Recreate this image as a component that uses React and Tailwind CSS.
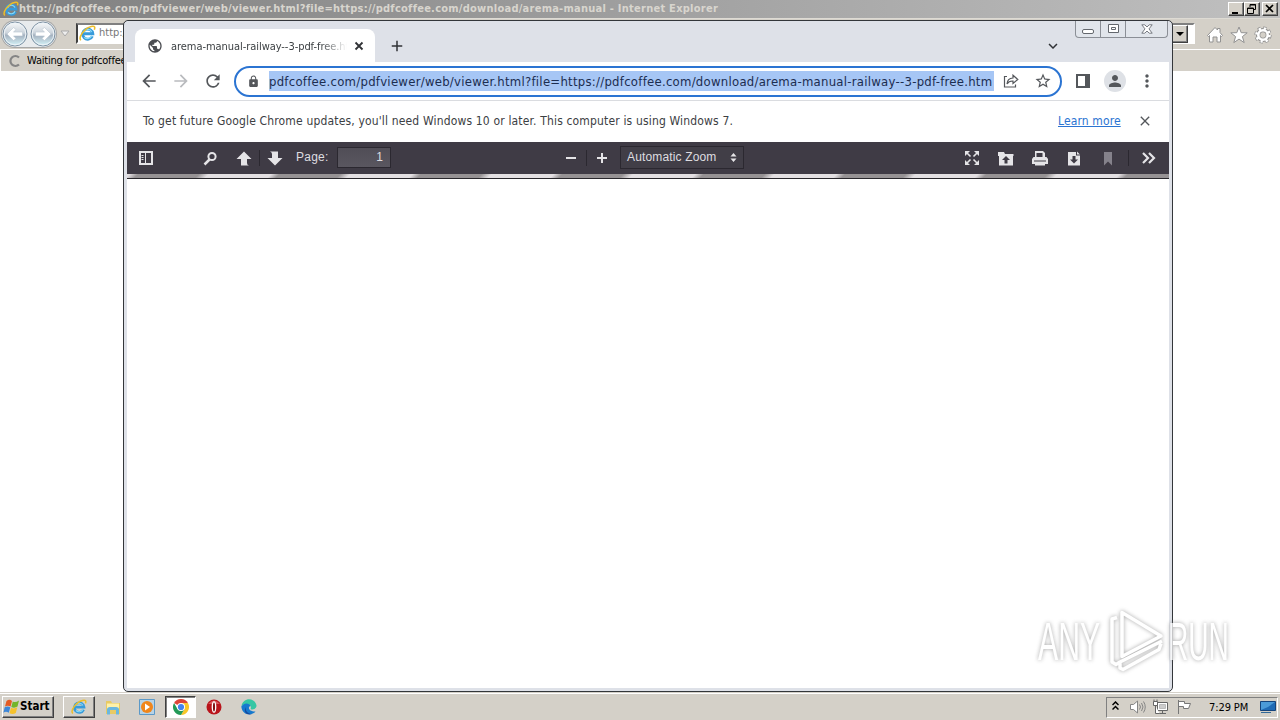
import {
  MdAdd,
  MdArrowBack,
  MdArrowForward,
  MdClose,
  MdExpandMore,
  MdLock,
  MdMoreVert,
  MdPerson,
  MdPublic,
  MdRefresh,
  MdStarOutline,
} from 'react-icons/md'

const RAISED = 'border border-t-white border-l-white border-r-[#404040] border-b-[#404040] bg-[#d4d0c8] shadow-[inset_-1px_-1px_0_#808080]'

function IeLogo({ size = 16 }) {
  return (
    <svg width={size} height={size} viewBox="0 0 16 16" fill="none" className="shrink-0">
      <path d="M12.6 10.6A4.8 4.8 0 1 1 13 8.2H4.5" stroke="#379bdb" strokeWidth="2.7" />
      <path d="M12 10.2A4.3 4.3 0 0 1 5 11.5M4.500 7.2a4 4 0 0 1 7.500-.7" stroke="#8bdcf8" strokeWidth="1.1" />
      <path d="M1.800 14.400C-1 11.500 5.200 3 11.500 1.400c3.600-.9 3.700 1 2.900 3" stroke="#edbd28" strokeWidth="1.5" />
    </svg>
  )
}

function NavArrow({ flip }) {
  return (
    <svg width="26" height="26" viewBox="0 0 26 26" className={flip ? '-scale-x-100' : ''}>
      <defs>
        <linearGradient id="orb" x1="0" y1="0" x2="0" y2="1">
          <stop offset="0" stopColor="#f9fafb" />
          <stop offset="0.45" stopColor="#ccd4dc" />
          <stop offset="0.55" stopColor="#a5b2c0" />
          <stop offset="1" stopColor="#d7f6fb" />
        </linearGradient>
      </defs>
      <circle cx="13" cy="13" r="12" fill="url(#orb)" stroke="#8094a6" />
      <circle cx="13" cy="13" r="10.8" fill="none" stroke="#edf3f7" />
      <path d="M5 13 11.500 6.500l2.500 2-2.500 2.600h9v3.800h-9l2.500 2.600-2.500 2z" fill="#fff" stroke="#b2c0cc" strokeWidth=".5" />
    </svg>
  )
}

function IeTitleBar() {
  return (
    <div className="flex h-[18px] items-center bg-linear-to-r from-[#808080] to-[#c0c0c0] pl-[3px] pr-[2px]">
      <IeLogo />
      <span className="grow whitespace-nowrap text-[11px] font-bold leading-[18px] tracking-[0.25px] text-[#d8d5ce]">
        http://pdfcoffee.com/pdfviewer/web/viewer.html?file=https://pdfcoffee.com/download/arema-manual - Internet Explorer
      </span>
      <div className="flex">
        <div className={`h-[14px] w-4 ${RAISED}`}>
          <svg width="14" height="12"><path d="M3 9h6v2H3z" /></svg>
        </div>
        <div className={`h-[14px] w-4 ${RAISED}`}>
          <svg width="14" height="12" fill="none" stroke="#000">
            <path d="M5 4V1.500h5.500v5H9M5 2h6M2.500 5h6v5.500h-6zM2 5.500h7" />
          </svg>
        </div>
        <div className={`ml-[2px] h-[14px] w-4 ${RAISED}`}>
          <svg width="14" height="12"><path d="m3 2 7 7M10 2 3 9" stroke="#000" strokeWidth="1.7" /></svg>
        </div>
      </div>
    </div>
  )
}

function IeToolbar() {
  return (
    <div className="flex h-[31px] items-center border-t border-[#dedbd4] pb-px pl-[2px]">
      <div className="flex rounded-full bg-[#e8ebed] shadow-[0_0_0_1px_#a7a8a8]">
        <NavArrow />
        <div className="ml-[2px] h-[26px]"><NavArrow flip /></div>
      </div>
      <svg width="12" height="8" className="ml-[3px]"><path d="M2 1h8L6 6z" fill="#eee" stroke="#aaa" /></svg>
      <div className="ml-[5px] flex h-[21px] w-[1119px] items-center border-2 border-r-white border-b-white border-t-[#808080] border-l-[#404040] bg-white pl-[1px]">
        <IeLogo size={17} />
        <span className="ml-[3px] grow text-[11px] text-[#777]">http://pdfcoffee.com</span>
        <div className={`mr-[5px] flex h-[18px] w-4 items-center justify-center ${RAISED}`}>
          <svg width="8" height="4"><path d="M0 0h8L4 4z" /></svg>
        </div>
      </div>
      <div className="ml-[11px] mt-[3px] flex gap-[6px]">
        <svg width="18" height="18" viewBox="0 0 18 18" fill="#fff" stroke="#929292" strokeWidth="1">
          <path d="M1.500 9.500 9 1.500l2.500 2.500V2.500h2.500v4l2.500 3-1 1-1-1v6.500H11v-5H7v5H3.500V9.500l-1 1z" />
        </svg>
        <svg width="18" height="18" viewBox="0 0 18 18" fill="#fff" stroke="#929292">
          <path d="m9 1 2.200 5.700 6 .1-4.800 3.800 1.800 6-5.200-3.500-5.200 3.500 1.800-6L.8 6.800l6-.1z" />
        </svg>
        <svg width="18" height="18" viewBox="0 0 18 18" fill="none">
          <circle cx="9" cy="9" r="6.900" stroke="#8e8e8e" strokeWidth="3.400" strokeDasharray="3 2.420" />
          <circle cx="9" cy="9" r="4.900" stroke="#8e8e8e" strokeWidth="4.400" />
          <circle cx="9" cy="9" r="6.500" stroke="#fff" strokeWidth="2.700" strokeDasharray="2.200 2.905" />
          <circle cx="9" cy="9" r="4.700" stroke="#fff" strokeWidth="2.600" />
        </svg>
      </div>
    </div>
  )
}

function CaptionButtons() {
  return (
    <div className="flex h-[17px] w-[93px] rounded-b-[4px] border border-t-0 border-[#8b8f96] bg-[#e1e5eb]">
      <div className="flex w-[25px] justify-center border-r border-[#8b8f96] pt-[8px]">
        <div className="h-[5px] w-[12px] rounded-[2px] border border-[#63676d] bg-white" />
      </div>
      <div className="flex w-[25px] justify-center border-r border-[#8b8f96] pt-[3px]">
        <svg width="11" height="9" fill="#fff" stroke="#63676d"><path d="M.5.5h10v8H.5zM3.500 3.500h4v2h-4z" /></svg>
      </div>
      <div className="flex grow justify-center pt-[3px]">
        <svg width="12" height="10" viewBox="0 0 12 10" fill="#fff" stroke="#777b82">
          <path d="M.8.8h3L6 3 8.200.8h3L8 4.900l3.200 4.300h-3L6 7 3.800 9.200h-3L4 4.900z" />
        </svg>
      </div>
    </div>
  )
}

function TabStrip() {
  return (
    <div className="flex h-[41px] bg-[#dee1e8] pl-2">
      <div className="mt-[8px] flex h-[33px] w-[240px] items-center rounded-t-[8px] bg-white pl-[12px]">
        <MdPublic size={16} className="shrink-0 text-[#4b4d52]" />
        <div className="ml-2 mt-[3px] w-[176px] overflow-hidden whitespace-nowrap text-[11px] tracking-[-0.05px] text-[#3c4043] mask-r-from-85%">
          arema-manual-railway--3-pdf-free.html
        </div>
        <svg width="10" height="10" className="ml-[7px]"><path d="m1.500 1.500 7 7m0-7-7 7" stroke="#303236" strokeWidth="1.800" /></svg>
      </div>
      <MdAdd size={18} className="ml-[13px] mt-4 text-[#303236]" />
      <div className="grow" />
      <MdExpandMore size={18} className="mr-[13px] mt-[16px] text-[#303236]" />
      <CaptionButtons />
      <div className="w-px" />
    </div>
  )
}

function AddressRow() {
  return (
    <div className="flex h-[39px] items-center border-b border-[#dadce0] bg-white pl-[12px] text-[#54575b]">
      <MdArrowBack size={20} />
      <MdArrowForward size={20} className="ml-3 text-[#b9bbbe]" />
      <MdRefresh size={20} className="ml-[12px]" />
      <div className="ml-[11px] flex h-[31px] w-[828px] items-center rounded-full border-2 border-[#2b74d2] pl-[11px]">
        <MdLock size={13} className="shrink-0" />
        <div className="ml-[9px] h-5 w-[725px] whitespace-nowrap bg-[#a6c6f5] text-[13px] leading-[22px] tracking-[0.26px] text-[#1c2d50]">
          pdfcoffee.com/pdfviewer/web/viewer.html?file=https://pdfcoffee.com/download/arema-manual-railway--3-pdf-free.htm
        </div>
        <svg width="16" height="14" viewBox="0 0 16 14" fill="none" stroke="currentColor" strokeWidth="1.200" className="ml-[9px] shrink-0">
          <path d="M4 2.500H1.500V13h11v-2.500M4 10c.2-4 2.300-5.800 6-6V1.200L14.800 5.500 10 9.500V7C7 6.800 5.300 7.800 4 10z" />
        </svg>
        <MdStarOutline size={18} className="ml-[15px] shrink-0" />
      </div>
      <svg width="14" height="14" className="ml-[14px]">
        <path d="M1 1h12v12H1z" fill="none" stroke="#54575b" strokeWidth="2" />
        <path d="M9 1h4v12H9z" fill="#54575b" />
      </svg>
      <div className="ml-[14px] flex size-[22px] items-center justify-center rounded-full bg-[#dee1e6]">
        <MdPerson size={18} />
      </div>
      <MdMoreVert size={20} className="ml-[11px]" />
    </div>
  )
}

function InfoBar() {
  return (
    <div className="flex h-[41px] items-center bg-white pb-[2px] pl-4 text-[12px] text-[#3c4043]">
      <span className="w-[915px] whitespace-nowrap tracking-[0.16px]">
        To get future Google Chrome updates, you'll need Windows 10 or later. This computer is using Windows 7.
      </span>
      <span className="w-[64px] whitespace-nowrap tracking-[0.12px] text-[#2b74d2] underline">Learn more</span>
      <MdClose size={16} className="ml-[15px] mt-px text-[#54575b]" />
    </div>
  )
}

const Sep = ({ className }) => <div className={`h-4 w-px bg-[#2b2830] ${className}`} />

function PdfBar() {
  return (
    <div className="flex h-8 items-center bg-[#3f3b45] pl-3 font-[Liberation_Sans] text-[12px] text-[#dedde0]">
      <svg width="14" height="14" fill="none" stroke="#e5e4e7">
        <path d="M1 1h12v12H1z" strokeWidth="2" />
        <path d="M6.500 1v12M2.500 4.500h2M2.500 6.500h2M2.500 8.500h2" />
      </svg>
      <svg width="15" height="15" fill="none" stroke="#e5e4e7" className="ml-[50px]">
        <circle cx="9" cy="5.500" r="3.600" strokeWidth="2" />
        <path d="m6.500 8.500-5 5" strokeWidth="2.500" />
      </svg>
      <svg width="16" height="15" fill="#e5e4e7" className="ml-[18px]"><path d="m8 .5 7.500 7.500H11v4q0 2 2 2.500H5V8H.5z" /></svg>
      <Sep className="ml-[7px]" />
      <svg width="16" height="15" fill="#e5e4e7" className="ml-[7px]"><path d="M3 .5h8V7h4.500L8 14.500.5 7H5V3Q5 1 3 .5z" /></svg>
      <span className="-mt-[2px] ml-[13px] w-[33px] tracking-[0.25px]">Page:</span>
      <div className="-mt-px ml-[8px] h-[21px] w-[54px] border border-[#2b2830] bg-linear-to-b from-[#504d56] to-[#5a5760] pr-[7px] text-right leading-[19px]">1</div>
      <svg width="12" height="12" className="ml-[174px]"><path d="M1 5h10v2H1z" fill="#e5e4e7" /></svg>
      <Sep className="ml-[9px]" />
      <svg width="12" height="12" className="ml-[9px]"><path d="M1 5h10v2H1zM5 1h2v10H5z" fill="#e5e4e7" /></svg>
      <div className="-mt-[2px] ml-[12px] flex h-[23px] w-[124px] items-center justify-between border border-[#2b2830] bg-[#413e47] pl-[6px] pr-[6px]">
        <span className="whitespace-nowrap tracking-[0.15px]">Automatic Zoom</span>
        <svg width="7" height="9" fill="#e5e4e7"><path d="M3.500 0 6.500 3.500h-6zM3.500 9 .5 5.500h6z" /></svg>
      </div>
      <div className="grow" />
      <div className="flex items-center gap-[18px]">
        <svg width="16" height="16" fill="#e5e4e7" stroke="#e5e4e7">
          <path d="M1 6V1h5zM15 6V1h-5zM1 10v5h5zM15 10v5h-5z" stroke="none" />
          <path d="m3 3 3.500 3.500M13 3 9.500 6.500M3 13l3.500-3.500M13 13 9.500 9.500" strokeWidth="1.600" />
        </svg>
        <svg width="16" height="15"><path d="M0 1h6l1 2h8.500v2H0zM1 5h14v9.500H1z" fill="#e5e4e7" /><path d="m8 5 4 4H9.500v3.500h-3V9H4z" fill="#3f3b45" /></svg>
        <svg width="16" height="15">
          <path d="M3 0h8l2 2v4h1.500L16 8v5H0V8l1.500-2H3z" fill="#e5e4e7" />
          <path d="M4.500 2h6v4h-6zM2 9.500h12v1H2z" fill="#3f3b45" />
          <path d="M3 11h10v3.500H3z" fill="#e5e4e7" />
        </svg>
        <svg width="16" height="15"><path d="M2 1h8v3.500h4v10H2zM11 .5l3 3h-3z" fill="#e5e4e7" /><path d="M6.500 5h3v3.500H12l-4 4-4-4h2.500z" fill="#3f3b45" /></svg>
        <svg width="16" height="15"><path d="M4 1h8v13.500l-4-4-4 4z" fill="#85828b" /></svg>
      </div>
      <Sep className="ml-[12px]" />
      <svg width="16" height="14" fill="none" stroke="#e5e4e7" strokeWidth="2.200" className="ml-[12px] mr-[12px]">
        <path d="m2 2 5 5-5 5M8 2l5 5-5 5" />
      </svg>
    </div>
  )
}

function ChromeWindow() {
  return (
    <div className="absolute left-[123px] top-[20px] flex h-[672px] w-[1050px] flex-col rounded-[5px] border-x-[1.5px] border-y border-[#33363a] bg-[#dee1e8] px-[3px] pb-[3px]">
      <TabStrip />
      <AddressRow />
      <InfoBar />
      <PdfBar />
      <div className="h-[4px] bg-[repeating-linear-gradient(135deg,#e3dfe2_0,#e3dfe2_2px,#969294_8px,#969294_51px,#e3dfe2_58px,#e3dfe2_100px)]" />
      <div className="h-px bg-[#28262b]" />
      <div className="grow bg-white" />
    </div>
  )
}

function Watermark() {
  return (
    <div className="absolute left-[1038px] top-[608px] flex h-[66px] items-center opacity-75 drop-shadow-[0_0_2px_#888]">
      <span className="inline-block w-[68px] origin-left scale-x-[0.57] font-[Liberation_Sans] text-[53px] leading-none text-white">ANY</span>
      <svg width="58" height="66" viewBox="0 0 58 66" fill="none" stroke="#fff" strokeWidth="3.500" strokeLinejoin="round" className="ml-[2px]">
        <path d="M14 4.500v44l39-20.500zM14 4.500 53 28M9 9.500 4 11v43l4 2.500 4-2.500 42-21M12 55v5l3 1.500 36-20 2-6" />
      </svg>
      <span className="ml-[2px] inline-block w-[64px] origin-left scale-x-[0.53] font-[Liberation_Sans] text-[53px] leading-none text-white">RUN</span>
    </div>
  )
}

function Taskbar() {
  return (
    <div className="flex h-7 items-center border-t border-[#d4d0c8] bg-[#d4d0c8] pl-[2px] pr-[2px] pt-px shadow-[inset_0_1px_0_#fff]">
      <div className={`flex h-[22px] w-[52px] items-center ${RAISED}`}>
        <svg width="17" height="16" viewBox="0 0 17 16" className="shrink-0">
          <path d="M3.500 2q3-2.500 5.500 0L7.600 7.500q-3-1.500-5.600 0z" fill="#e45b24" />
          <path d="M9.800 2.500q2.500 1.500 6.200-1L14.500 7.500q-3 2-6.200.5z" fill="#72b52b" />
          <path d="M1.700 8.300q3-1.500 5.600 0l-1.500 5.500q-3-2-5.400 0z" fill="#3d87d8" />
          <path d="M8 8.800q3 1.500 6.300-.5l-1.500 5.700q-3 2-6.300.3z" fill="#f5c22c" />
        </svg>
        <span className="text-[11.500px] font-bold text-black">Start</span>
      </div>
      <div className={`ml-[9px] flex h-[22px] w-8 items-center justify-center ${RAISED}`}><IeLogo /></div>
      <svg width="16" height="16" viewBox="0 0 16 16" className="ml-[10px]">
        <path d="M1 2h5l1 2h8v11H1z" fill="#e8ca64" />
        <path d="M2 4.500h12V10H2z" fill="#fff1a9" />
        <path d="M2 15.500v-5Q2 8 5 8h6q3 0 3 2.500v5h-3V11H5v4.500z" fill="#6bb7df" />
      </svg>
      <svg width="16" height="16" viewBox="0 0 16 16" className="ml-[18px]">
        <path d="M.5.5h15v15H.5z" fill="#b7d3e6" stroke="#5b99c8" />
        <circle cx="8" cy="8" r="6" fill="#f0861b" />
        <path d="m6 4.500 5 3.500-5 3.500z" fill="#fff" />
      </svg>
      <div className="ml-[10px] flex h-[22px] w-[31px] items-center justify-center border border-t-[#404040] border-l-[#404040] border-r-white border-b-white bg-white shadow-[inset_1px_1px_0_#808080]">
        <svg width="16" height="16" viewBox="0 0 16 16">
          <path d="M8 8 1.070 4A8 8 0 0 1 14.930 4z" fill="#dc4437" />
          <path d="M8 8V4h6.930A8 8 0 0 1 8 16l3.500-6z" fill="#f8c629" />
          <path d="M4.500 10 1.070 4A8 8 0 0 0 8 16l3.500-6z" fill="#239957" />
          <circle cx="8" cy="8" r="4" fill="#fff" />
          <circle cx="8" cy="8" r="3.100" fill="#4384ef" />
        </svg>
      </div>
      <svg width="16" height="16" viewBox="0 0 16 16" className="ml-[10px]">
        <circle cx="8" cy="8" r="7.500" fill="#b9141b" />
        <path d="M2 5Q8-2 14 5z" fill="#d9545a" />
        <ellipse cx="8" cy="8" rx="1.700" ry="5.200" fill="#811014" stroke="#fff" strokeWidth="1.300" />
      </svg>
      <svg width="16" height="16" viewBox="0 0 16 16" className="ml-[19px]">
        <path d="M.5 7C2-2 14-2 15.500 6.500c.3 3-3.500 5-6 3.500 2-4-4-7-9-3z" fill="#35c6a4" />
        <path d="M.3 7.500C3 3 9 4 9.500 7c-3 1-2 5.500 5 5.500-3 4-13 5-14.200-5z" fill="#1679ce" />
        <path d="M5 8c-1 4 2 7 6 7-6 2-9-3-6-7z" fill="#16489d" />
      </svg>
      <div className="grow" />
      <div className="flex h-[21px] w-[172px] items-center border border-t-[#808080] border-l-[#808080] border-r-white border-b-white pl-[5px]">
        <svg width="7" height="10" fill="none" stroke="#000" strokeWidth="1.500" className="-mt-[2px]"><path d="m.5 4 3-3 3 3M.5 8.500l3-3 3 3" /></svg>
        <svg width="17" height="14" fill="#fff" stroke="#858585" className="ml-[10px]">
          <path d="M1.500 4.500h3l4-3.500v12l-4-3.500h-3z" />
          <path d="M10.500 4.500q2 2.500 0 5M12.500 3q3 4 0 8M14.500 1.500q3.500 5.500 0 11" fill="none" />
        </svg>
        <svg width="17" height="16" className="ml-[6px]" fill="#fff" stroke="#666">
          <path d="M5.500 3.500h10v8h-10zM7 14.500h7M10.500 11.500v3" />
          <path d="M7.500 5.500h6v4h-6z" fill="#ccc" stroke="#bbb" />
          <path d="M1.500 2.500h4v4h-4zM2 .5v2M5 .5v2M3.500 6.500v8h4" />
        </svg>
        <svg width="17" height="16" className="ml-[7px]" fill="#fff" stroke="#777">
          <path d="M2.500 1v14M2.500 2.500h6v2h6l-2 5H7.500v-2h-5z" />
        </svg>
        <span className="ml-[16px] mt-[2px] w-[40px] whitespace-nowrap text-[11px] tracking-[-0.1px] text-black">7:29 PM</span>
        <svg width="16" height="14" className="ml-[11px]">
          <path d="M.5 1.500h15v9H.5z" fill="#206bb5" stroke="#15447c" />
          <path d="M1 2h14l-7 5-7 3z" fill="#4c9bd8" />
          <path d="M1 12h10v1H1z" fill="#326898" />
        </svg>
      </div>
    </div>
  )
}

export default function App() {
  return (
    <div className="relative flex h-[720px] w-[1280px] flex-col overflow-hidden bg-[#d4d0c8] font-['DejaVu_Sans_Condensed','DejaVu_Sans',sans-serif] [font-stretch:condensed]">
      <IeTitleBar />
      <IeToolbar />
      <div className="flex h-[22px] items-center border-t border-l border-white pl-[7px] text-[11px] text-black">
        <svg width="14" height="14" fill="none" stroke="#858585" strokeWidth="2.200"><path d="M11 3.500a5 5 0 1 0 0 7" /></svg>
        <span className="ml-[5px] mt-px whitespace-nowrap tracking-[-0.2px]">Waiting for pdfcoffee.com</span>
      </div>
      <div className="grow bg-white" />
      <Taskbar />
      <ChromeWindow />
      <Watermark />
    </div>
  )
}
